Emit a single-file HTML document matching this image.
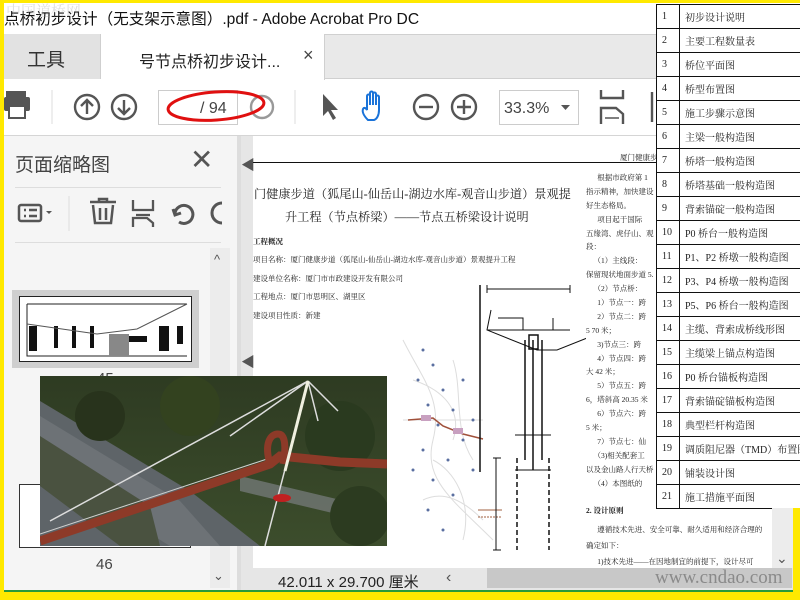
<!DOCTYPE html>
<html><head><meta charset="utf-8">
<style>
*{margin:0;padding:0;box-sizing:border-box}
body{width:800px;height:600px;overflow:hidden;background:#ffe900;font-family:"Liberation Sans","Noto Sans CJK SC",sans-serif;position:relative}
.a{position:absolute}
.t{white-space:nowrap}
.doc{font-family:"Liberation Serif","Noto Serif CJK SC",serif;color:#222}
.tb td{border:1px solid #111;height:24px;font-size:10px;font-family:"Liberation Serif","Noto Serif CJK SC",serif;color:#222;padding-left:5px;background:#fff;white-space:nowrap;overflow:hidden}
.tb{border-collapse:collapse;position:absolute;left:656px;top:4px;width:150px;table-layout:fixed}
.ic{stroke:#555;fill:none;stroke-width:2.4}
.rc div{height:13.9px;white-space:nowrap}
</style></head><body>
<div class="a" style="left:4px;top:3px;width:796px;height:589px;background:#fff"></div>
<div class="a t" style="left:4px;top:7px;font-size:15.6px;color:#111">点桥初步设计（无支架示意图）.pdf - Adobe Acrobat Pro DC</div>
<div class="a t" style="left:6px;top:0px;font-size:15px;color:rgba(150,150,150,.3);font-family:'Noto Serif CJK SC',serif">中国道桥网</div>
<div class="a" style="left:4px;top:34px;width:796px;height:45px;background:#e9e9e9;border-top:1px solid #d0d0d0;border-bottom:1px solid #d0d0d0"></div>
<div class="a" style="left:4px;top:34px;width:97px;height:45px;background:#e2e2e2;border-right:1px solid #cfcfcf"></div>
<div class="a t" style="left:27px;top:45px;font-size:19px;color:#333">工具</div>
<div class="a" style="left:101px;top:34px;width:224px;height:46px;background:#fff;border-right:1px solid #d0d0d0"></div>
<div class="a t" style="left:139px;top:48px;font-size:16px;color:#222">号节点桥初步设计...</div>
<div class="a t" style="left:303px;top:45px;font-size:18px;color:#444">×</div>
<div class="a" style="left:4px;top:80px;width:796px;height:56px;background:#fff;border-bottom:1px solid #d5d5d5"></div>
<svg class="a" style="left:0;top:80px" width="660" height="56">
<g fill="#555"><rect x="6" y="11" width="20" height="8"/><rect x="4" y="17" width="26" height="14" rx="2"/><rect x="9" y="26" width="16" height="12" fill="#fff" stroke="#555" stroke-width="2"/></g>
<line x1="52" y1="10" x2="52" y2="44" stroke="#ddd"/>
<g class="ic"><circle cx="87" cy="27" r="12"/><path d="M87 34V20M81 26l6-6 6 6"/><circle cx="124" cy="27" r="12"/><path d="M124 20v14M118 28l6 6 6-6"/>
<circle cx="262" cy="27" r="11" opacity=".6"/>
<circle cx="426" cy="27" r="12"/><path d="M419 27h14"/><circle cx="464" cy="27" r="12"/><path d="M457 27h14M464 20v14"/></g>
<rect x="158.5" y="10.5" width="79" height="34" fill="#fff" stroke="#ccc"/>
<text x="200" y="33" font-size="16" fill="#444" font-family="Liberation Sans">/ 94</text>
<ellipse cx="216" cy="26" rx="48" ry="14" fill="none" stroke="#e01010" stroke-width="3" transform="rotate(-4 216 26)"/>
<line x1="295" y1="10" x2="295" y2="44" stroke="#ddd"/>
<path d="M323 14l0 22 5-5 5 9 3-2-5-8 7 0z" fill="#555"/>
<path d="M368 40c-4-4-6-8-5-11 1-2 3-1 4 1v-14c0-2 3-2 3 0v9-12c0-2 3-2 3 0v12-11c0-2 3-2 3 0v11-8c0-2 3-2 3 0v13c0 5-2 9-5 10z" fill="none" stroke="#1a73d9" stroke-width="2"/>
<rect x="499.5" y="10.5" width="79" height="34" fill="#fff" stroke="#ccc"/>
<text x="504" y="33" font-size="16" fill="#444" font-family="Liberation Sans">33.3%</text>
<path d="M561 25h9l-4.5 5z" fill="#555"/>
<path d="M601 10v8h22v-8M601 44v-16h15l7 6v10" class="ic"/><path d="M605 38h14" stroke="#555" stroke-width="1.5"/>
<path d="M652 12v30" class="ic"/>
</svg>
<div class="a" style="left:4px;top:136px;width:233px;height:456px;background:#f5f5f5"></div>
<div class="a t" style="left:15px;top:150px;font-size:19px;color:#444">页面缩略图</div>
<div class="a t" style="left:190px;top:143px;font-size:28px;color:#555;font-weight:300">✕</div>
<div class="a" style="left:15px;top:187px;width:206px;height:1px;background:#ddd"></div>
<div class="a" style="left:15px;top:242px;width:206px;height:1px;background:#ddd"></div>
<svg class="a" style="left:0;top:190px" width="237" height="50">
<rect x="19" y="15" width="22" height="16" rx="2" fill="none" stroke="#555" stroke-width="2.5"/><path d="M24 20h2M24 26h2M29 20h8M29 26h8" stroke="#555" stroke-width="2.5"/><path d="M46 21h6l-3 3z" fill="#555"/>
<line x1="69" y1="6" x2="69" y2="41" stroke="#ddd"/>
<path d="M90 12h26M99 12v-3h8v3M93 15l2 18h16l2-18M100 18v12M106 18v12" fill="none" stroke="#555" stroke-width="2.5"/>
<path d="M133 10v10h20v-10M133 37v-9h14l6 5v4M136 25h14" fill="none" stroke="#555" stroke-width="2.3"/>
<path d="M179 32a9 9 0 1 0 -4-9M173 19l2 6 6-2" fill="none" stroke="#555" stroke-width="3"/>
<path d="M222 13a10 10 0 0 0 0 20" fill="none" stroke="#555" stroke-width="3"/>
</svg>
<div class="a" style="left:210px;top:248px;width:20px;height:340px;background:#ececec"></div>
<div class="a t" style="left:214px;top:252px;font-size:13px;color:#555">^</div>
<div class="a t" style="left:213px;top:568px;font-size:13px;color:#555">⌄</div>
<div class="a" style="left:12px;top:290px;width:187px;height:78px;background:#cfcfcf"></div>
<svg class="a" style="left:19px;top:296px" width="173" height="66"><rect width="173" height="66" fill="#fff" stroke="#222" stroke-width="2"/>
<path d="M8 8h160M8 8v52h160" stroke="#222" fill="none"/><g fill="#111"><rect x="10" y="30" width="8" height="25"/><rect x="35" y="30" width="4" height="22"/><rect x="53" y="30" width="4" height="22"/><rect x="71" y="30" width="4" height="22"/><rect x="98" y="40" width="30" height="6"/><rect x="140" y="30" width="10" height="25"/><rect x="158" y="30" width="6" height="18"/></g>
<path d="M8 28l70 10 40-5 50-25" stroke="#555" fill="none"/><rect x="90" y="38" width="20" height="22" fill="#888"/></svg>
<div class="a t" style="left:97px;top:370px;font-size:15px;color:#444">45</div>
<div class="a" style="left:19px;top:484px;width:172px;height:64px;background:#fff;border:1px solid #333"></div>
<div class="a t" style="left:96px;top:556px;font-size:15px;color:#444">46</div>
<div class="a" style="left:237px;top:136px;width:4px;height:456px;background:#ddd"></div>
<div class="a" style="left:241px;top:136px;width:415px;height:432px;background:#e6e6e6"></div>
<div class="a" style="left:253px;top:136px;width:403px;height:432px;background:#fff"></div>
<div class="a t" style="left:241px;top:155px;font-size:14px;color:#555">◀</div>
<div class="a t" style="left:241px;top:352px;font-size:14px;color:#555">◀</div>
<div class="a" style="left:253px;top:162px;width:403px;height:1px;background:#111"></div>
<div class="a doc t" style="left:620px;top:152px;font-size:7.5px">厦门健康步</div>
<div class="doc">
<div class="a t" style="left:254px;top:185px;font-size:12.2px">门健康步道（狐尾山-仙岳山-湖边水库-观音山步道）景观提</div>
<div class="a t" style="left:285px;top:208px;font-size:12.2px">升工程（节点桥梁）——节点五桥梁设计说明</div>
<div class="a t" style="left:253px;top:236px;font-size:7.5px;font-weight:bold">工程概况</div>
<div class="a t" style="left:253px;top:254px;font-size:7.5px">项目名称：厦门健康步道（狐尾山-仙岳山-湖边水库-观音山步道）景观提升工程</div>
<div class="a t" style="left:253px;top:273px;font-size:7.5px">建设单位名称：厦门市市政建设开发有限公司</div>
<div class="a t" style="left:253px;top:291px;font-size:7.5px">工程地点：厦门市思明区、湖里区</div>
<div class="a t" style="left:253px;top:310px;font-size:7.5px">建设项目性质：新建</div>
<div class="a rc" style="left:586px;top:172px;font-size:7.5px;width:70px;height:330px;overflow:hidden">
<div>&nbsp;&nbsp;&nbsp;&nbsp;&nbsp;&nbsp;根据市政府第 1</div><div>指示精神，加快建设</div><div>好生态格局。</div><div>&nbsp;&nbsp;&nbsp;&nbsp;&nbsp;&nbsp;项目起于国际</div><div>五缘湾、虎仔山、观</div><div>段：</div><div>&nbsp;&nbsp;&nbsp;&nbsp;（1）主线段：</div><div>保留现状地面步道 5.</div><div>&nbsp;&nbsp;&nbsp;&nbsp;（2）节点桥：</div><div>&nbsp;&nbsp;&nbsp;&nbsp;&nbsp;&nbsp;1）节点一：跨</div><div>&nbsp;&nbsp;&nbsp;&nbsp;&nbsp;&nbsp;2）节点二：跨</div><div>5 70 米；</div><div>&nbsp;&nbsp;&nbsp;&nbsp;&nbsp;&nbsp;3)节点三：跨</div><div>&nbsp;&nbsp;&nbsp;&nbsp;&nbsp;&nbsp;4）节点四：跨</div><div>大 42 米；</div><div>&nbsp;&nbsp;&nbsp;&nbsp;&nbsp;&nbsp;5）节点五：跨</div><div>6，塔斜高 20.35 米</div><div>&nbsp;&nbsp;&nbsp;&nbsp;&nbsp;&nbsp;6）节点六：跨</div><div>5 米；</div><div>&nbsp;&nbsp;&nbsp;&nbsp;&nbsp;&nbsp;7）节点七：仙</div><div>&nbsp;&nbsp;&nbsp;&nbsp;（3)相关配套工</div><div>以及金山路人行天桥</div><div>&nbsp;&nbsp;&nbsp;&nbsp;（4）本图纸的</div>
</div>
<div class="a t" style="left:586px;top:505px;font-size:7.5px;font-weight:bold">2. 设计原则</div>
<div class="a t" style="left:586px;top:524px;font-size:7.5px">&nbsp;&nbsp;&nbsp;&nbsp;&nbsp;&nbsp;遵循技术先进、安全可靠、耐久适用和经济合理的</div>
<div class="a t" style="left:586px;top:540px;font-size:7.5px">确定如下：</div>
<div class="a t" style="left:586px;top:556px;font-size:7.5px">&nbsp;&nbsp;&nbsp;&nbsp;&nbsp;&nbsp;1)技术先进——在因地制宜的前提下，设计尽可</div>
</div>
<svg class="a" style="left:253px;top:280px" width="333" height="288">
<g stroke="#ddd" fill="none"><path d="M150 60c20 40 40 60 30 100s20 60 60 100M160 100c30 10 50 30 40 60M180 180c20 10 40 40 30 80M150 140h80M170 220c20-10 40 0 60 20M200 80c10 30 0 70 20 100"/></g>
<g fill="#5a6fa0"><circle cx="170" cy="70" r="1.5"/><circle cx="180" cy="85" r="1.5"/><circle cx="165" cy="100" r="1.5"/><circle cx="190" cy="110" r="1.5"/><circle cx="175" cy="125" r="1.5"/><circle cx="200" cy="130" r="1.5"/><circle cx="185" cy="145" r="1.5"/><circle cx="210" cy="160" r="1.5"/><circle cx="170" cy="170" r="1.5"/><circle cx="195" cy="180" r="1.5"/><circle cx="220" cy="190" r="1.5"/><circle cx="180" cy="200" r="1.5"/><circle cx="200" cy="215" r="1.5"/><circle cx="175" cy="230" r="1.5"/><circle cx="190" cy="250" r="1.5"/><circle cx="210" cy="100" r="1.5"/><circle cx="220" cy="140" r="1.5"/><circle cx="160" cy="190" r="1.5"/></g>
<path d="M155 140l25-2 10 8 20 8 20 5" stroke="#a0503a" fill="none" stroke-width="1.5"/>
<rect x="168" y="135" width="10" height="6" fill="#c8a0c0"/><rect x="200" y="148" width="10" height="6" fill="#c8a0c0"/>
<path d="M225 230h24" stroke="#a06040"/><path d="M225 237h24" stroke="#a06040" stroke-dasharray="2 1"/>
<line x1="227" y1="5" x2="227" y2="192" stroke="#111" stroke-width="1.5"/>
<g stroke="#111" fill="none"><path d="M234 9h83M234 5v8M317 5v8"/><path d="M238 30l-4 20 50 20h20l50-20-4-20M234 50h83M245 38h25v12M300 38v12"/><rect x="276" y="55" width="9" height="14" stroke-width="1.5"/>
<path d="M272 60v120M289 60v120M280 60v130" stroke-width="1.5"/><path d="M262 155h36M262 190h36"/><path d="M264 178v92M296 178v92" stroke-dasharray="5 3" stroke-width="1.5"/><path d="M243 178v92M240 178h8M240 270h8"/></g>
</svg>
<svg class="a" style="left:40px;top:376px" width="347" height="170">
<defs><linearGradient id="g1" x1="0" y1="0" x2="0" y2="1"><stop offset="0" stop-color="#2e3b22"/><stop offset="1" stop-color="#3c4d2c"/></linearGradient></defs>
<rect width="347" height="170" fill="url(#g1)"/>
<path d="M0 25L150 115 220 170H0z" fill="#5e6468"/>
<path d="M0 40L140 125 180 170H130L0 90z" fill="#6d7276"/>
<path d="M0 60L110 130 120 170H80L0 110z" fill="#4a5240"/>
<path d="M200 100L347 135V150L200 115z" fill="#7a7f80" opacity=".7"/>
<circle cx="60" cy="40" r="25" fill="#28331c"/><circle cx="150" cy="30" r="30" fill="#33421f"/><circle cx="300" cy="60" r="35" fill="#2a3a1f"/><circle cx="320" cy="140" r="30" fill="#2c3b20"/>
<path d="M0 165L230 88 240 80 300 86 347 88" stroke="#8d3a28" stroke-width="9" fill="none"/>
<path d="M0 158L230 82" stroke="#cfcfcf" stroke-width="1" fill="none"/>
<path d="M230 88c-6-20 0-30 8-30 8 0 8 15 5 30" stroke="#8d3a28" stroke-width="7" fill="none"/>
<path d="M225 170L268 5M268 5L10 145M268 5L190 60M268 5l10 40M268 5l30 30" stroke="#ddd" stroke-width="1.5" fill="none"/>
<path d="M268 5L245 95" stroke="#f0f0e0" stroke-width="3"/>
<ellipse cx="242" cy="122" rx="9" ry="4" fill="#c02020"/>
</svg>
<div class="a" style="left:241px;top:568px;width:559px;height:24px;background:#e6e6e6"></div>
<div class="a t" style="left:278px;top:571px;font-size:15px;color:#222">42.011 x 29.700 厘米</div>
<div class="a t" style="left:446px;top:569px;font-size:16px;color:#555">‹</div>
<div class="a" style="left:487px;top:568px;width:305px;height:20px;background:#c8c8c8"></div>
<div class="a t" style="left:655px;top:567px;font-size:19px;color:#8a8a8a;font-family:'Liberation Serif',serif">www.cndao.com</div>
<div class="a" style="left:4px;top:590px;width:796px;height:2px;background:#2a9a3a"></div>
<table class="tb">
<colgroup><col style="width:23px"><col style="width:127px"></colgroup>
<tr><td>1</td><td>初步设计说明</td></tr>
<tr><td>2</td><td>主要工程数量表</td></tr>
<tr><td>3</td><td>桥位平面图</td></tr>
<tr><td>4</td><td>桥型布置图</td></tr>
<tr><td>5</td><td>施工步骤示意图</td></tr>
<tr><td>6</td><td>主梁一般构造图</td></tr>
<tr><td>7</td><td>桥塔一般构造图</td></tr>
<tr><td>8</td><td>桥塔基础一般构造图</td></tr>
<tr><td>9</td><td>背索锚碇一般构造图</td></tr>
<tr><td>10</td><td>P0 桥台一般构造图</td></tr>
<tr><td>11</td><td>P1、P2 桥墩一般构造图</td></tr>
<tr><td>12</td><td>P3、P4 桥墩一般构造图</td></tr>
<tr><td>13</td><td>P5、P6 桥台一般构造图</td></tr>
<tr><td>14</td><td>主缆、背索成桥线形图</td></tr>
<tr><td>15</td><td>主缆梁上锚点构造图</td></tr>
<tr><td>16</td><td>P0 桥台锚板构造图</td></tr>
<tr><td>17</td><td>背索锚碇锚板构造图</td></tr>
<tr><td>18</td><td>典型栏杆构造图</td></tr>
<tr><td>19</td><td>调质阻尼器（TMD）布置图</td></tr>
<tr><td>20</td><td>铺装设计图</td></tr>
<tr><td>21</td><td>施工措施平面图</td></tr>
</table>
<div class="a" style="left:793px;top:508px;width:7px;height:92px;background:#ffe900"></div>
<div class="a" style="left:772px;top:508px;width:21px;height:60px;background:#ececec"></div>
<div class="a t" style="left:776px;top:550px;font-size:14px;color:#555">⌄</div>
</body></html>
